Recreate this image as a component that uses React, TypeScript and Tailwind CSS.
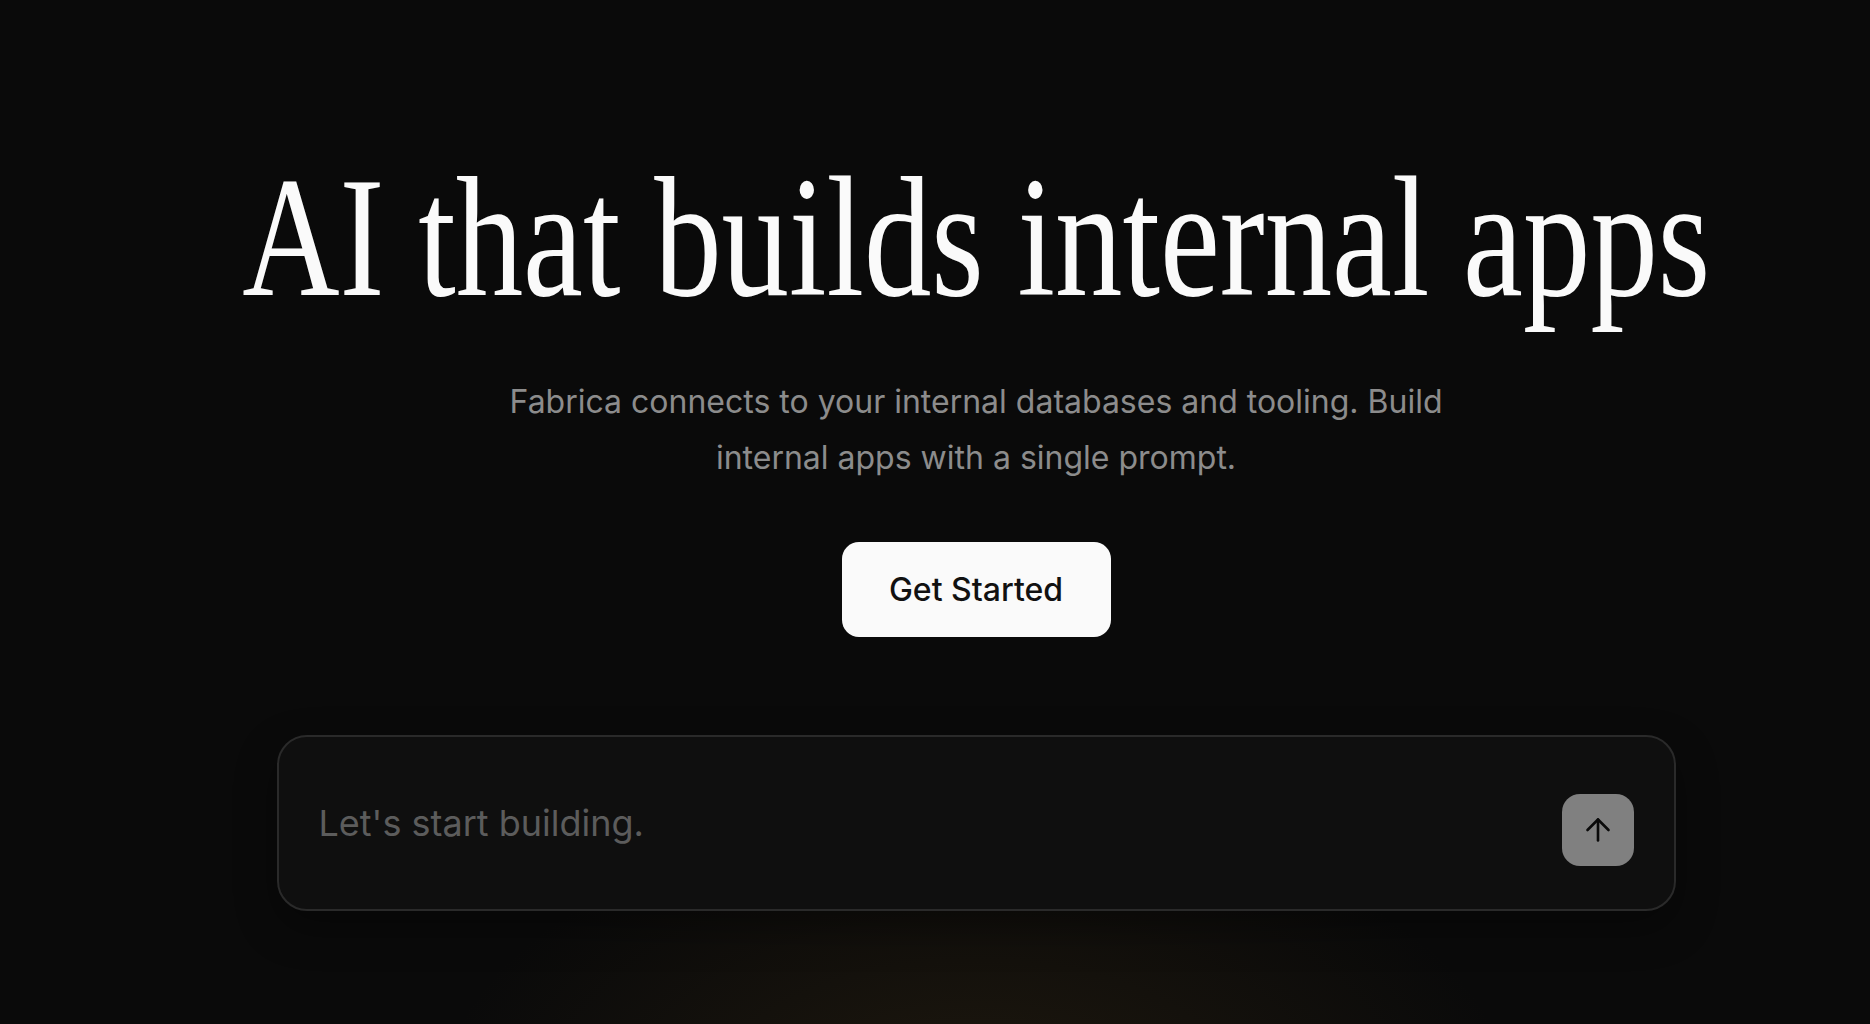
import { ArrowUp } from "lucide-react";

export default function App() {
    return (
        <div className="relative min-h-screen w-full overflow-hidden bg-[#0a0a0a] font-['Inter','Noto_Sans',sans-serif]">
            {/* warm glow under the prompt box */}
            <div className="pointer-events-none absolute inset-0 bg-[radial-gradient(ellipse_540px_300px_at_976px_1110px,rgba(60,45,20,0.4),rgba(10,10,10,0)_100%)]" />

            <main className="relative flex flex-col items-center pl-[82px] pt-[151px]">
                <h1 className="scale-x-[0.784] whitespace-nowrap font-['Liberation_Serif','Times_New_Roman',serif] text-[172px] leading-[172px] font-normal text-[#fafafa]">
                    AI that builds internal apps
                </h1>

                <p className="mt-[51px] max-w-[1040px] text-center text-[32px] leading-[56px] text-[#8c8c8c]">
                    Fabrica connects to your internal databases and tooling. Build internal apps with a single prompt.
                </p>

                <button className="mt-[56px] flex h-[95px] w-[269px] items-center justify-center rounded-[17px] bg-[#fafafa] text-[32px] font-medium text-[#111111]">
                    Get Started
                </button>

                <div className="mt-[98px] flex h-[176px] w-[1399px] items-center justify-between rounded-[30px] border-2 border-[#2a2a2a] bg-[#0f0f0f] pl-[40px] pr-[40px] shadow-[0_16px_40px_rgba(0,0,0,0.35)]">
                    <input
                        readOnly
                        placeholder="Let's start building."
                        className="w-full bg-transparent text-[36px] text-[#d4d4d4] placeholder:text-[#5c5c5c] focus:outline-none"
                    />
                    <button className="mt-[14px] flex h-[72px] w-[72px] shrink-0 items-center justify-center rounded-[18px] bg-[#808080] text-[#0a0a0a]">
                        <ArrowUp size={36} strokeWidth={1.75} />
                    </button>
                </div>
            </main>
        </div>
    );
}
